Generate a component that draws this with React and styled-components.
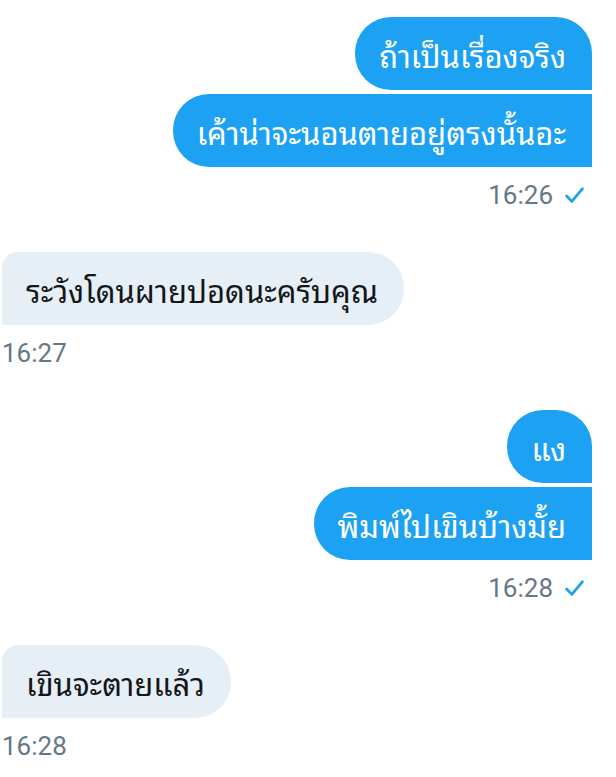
import React from "react";
import styled, { createGlobalStyle } from "styled-components";

const Global = createGlobalStyle`
  html, body { margin: 0; padding: 0; background: #ffffff; }
  body { font-family: Roboto, "Noto Sans Thai Looped", "Noto Sans Thai", "Noto Sans", sans-serif; }
`;

const Thread = styled.div`
  width: 616px;
  box-sizing: border-box;
  padding: 17px 24px 0 2px;
  display: flex;
  flex-direction: column;
`;

const Group = styled.div`
  display: flex;
  flex-direction: column;
  align-items: ${(p) => (p.$sent ? "flex-end" : "flex-start")};
  gap: 4px;
  margin-bottom: ${(p) => p.$gap || 0}px;
`;

const Bubble = styled.div`
  box-sizing: border-box;
  height: 73px;
  display: flex;
  align-items: center;
  padding: 0 26px 0 24px;
  font-family: "Noto Sans Thai Looped", "Noto Sans Thai", Roboto, sans-serif;
  font-size: 31px;
  white-space: nowrap;
  background: ${(p) => (p.$sent ? "#1da1f2" : "#e6eef6")};
  color: ${(p) => (p.$sent ? "#ffffff" : "#14171a")};
  border-radius: ${(p) =>
    p.$sent
      ? p.$first
        ? "36px 36px 0 36px"
        : "36px 0 0 36px"
      : "16px 36px 36px 0"};
`;

const Meta = styled.div`
  display: flex;
  align-items: center;
  gap: 12px;
  margin-top: 9px;
  font-family: Roboto, sans-serif;
  font-size: 26px;
  line-height: 30px;
  color: #657786;
  align-self: ${(p) => (p.$sent ? "flex-end" : "flex-start")};
  padding-right: ${(p) => (p.$sent ? "8px" : "0")};
`;

const Check = () => (
  <svg width="19" height="17" viewBox="0 0 19 17" fill="none">
    <path
      d="M1.6 9 L6.8 14.4 L17.4 1.8"
      stroke="#1da1f2"
      strokeWidth="2.8"
      strokeLinecap="round"
      strokeLinejoin="round"
    />
  </svg>
);

const Sent = ({ lines, time, gap }) => (
  <Group $sent $gap={gap}>
    {lines.map((t, i) => (
      <Bubble key={i} $sent $first={i === 0 && lines.length > 1}>
        {t}
      </Bubble>
    ))}
    <Meta $sent>
      <span>{time}</span>
      <Check />
    </Meta>
  </Group>
);

const Received = ({ lines, time, gap }) => (
  <Group $gap={gap}>
    {lines.map((t, i) => (
      <Bubble key={i}>{t}</Bubble>
    ))}
    <Meta>
      <span>{time}</span>
    </Meta>
  </Group>
);

export default function App() {
  return (
    <>
      <Global />
      <Thread>
        <Sent lines={["ถ้าเป็นเรื่องจริง", "เค้าน่าจะนอนตายอยู่ตรงนั้นอะ"]} time="16:26" gap={42} />
        <Received lines={["ระวังโดนผายปอดนะครับคุณ"]} time="16:27" gap={42} />
        <Sent lines={["แง", "พิมพ์ไปเขินบ้างมั้ย"]} time="16:28" gap={42} />
        <Received lines={["เขินจะตายแล้ว"]} time="16:28" />
      </Thread>
    </>
  );
}
